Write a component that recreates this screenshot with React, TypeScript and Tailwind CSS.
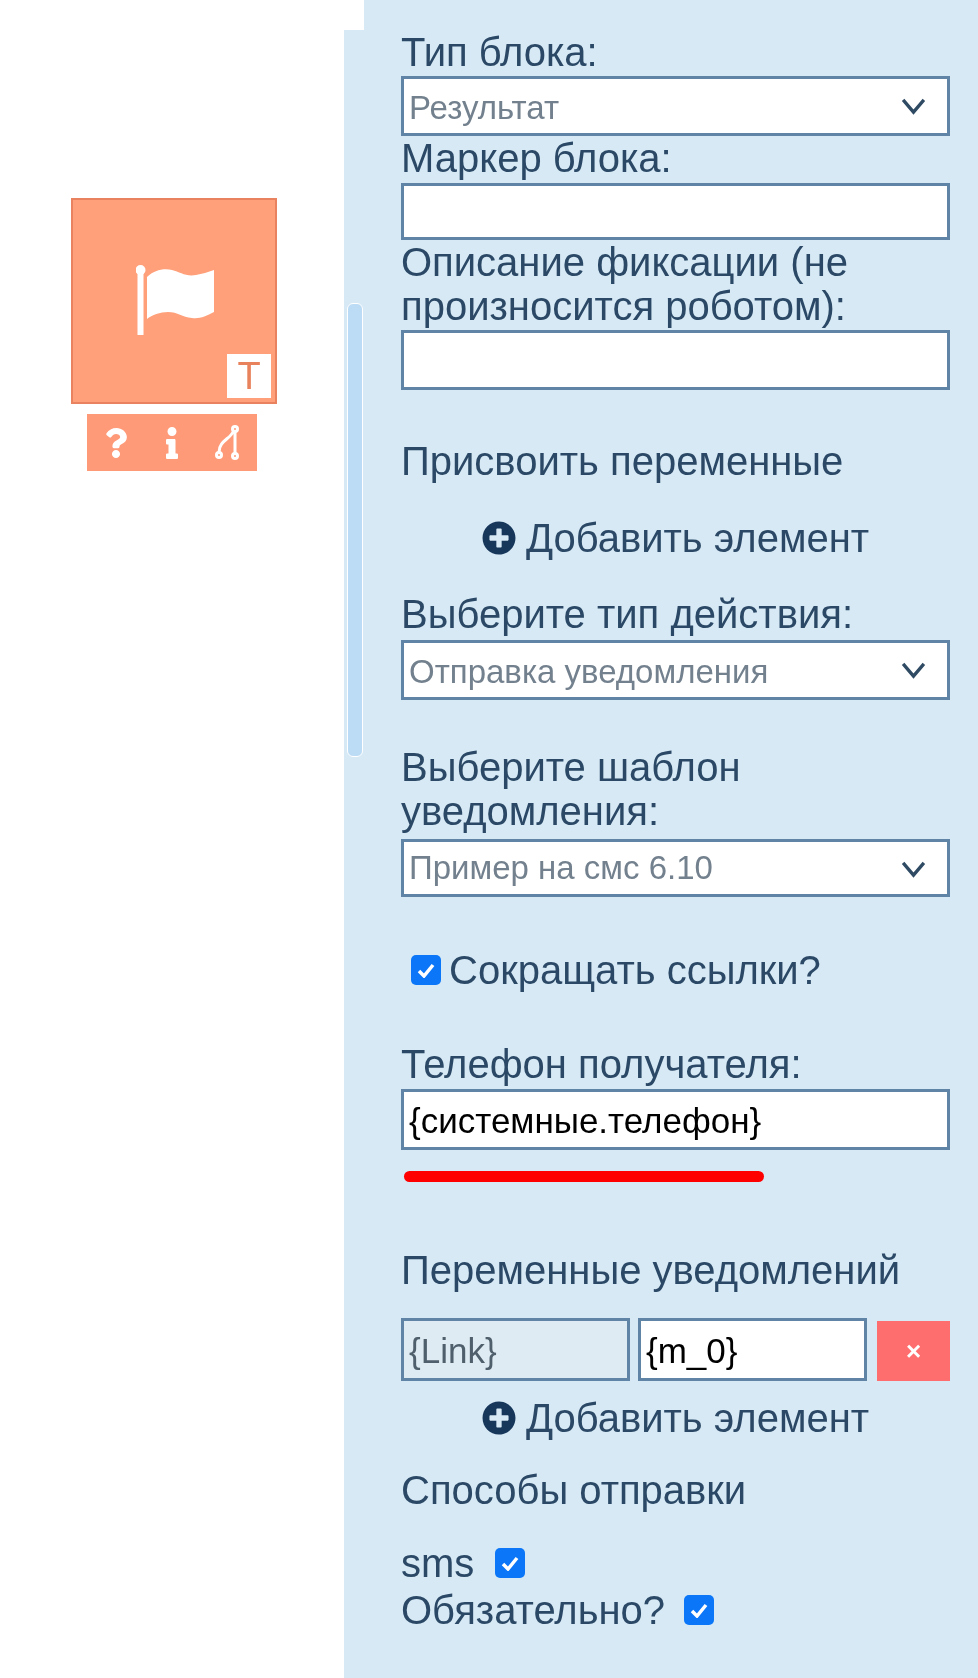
import React from 'react';
import { FaInfo, FaPlusCircle, FaQuestion } from 'react-icons/fa';

const labelCls = 'text-[40px] leading-[44px] text-[#2b4966]';
const inputCls =
  'block w-full border-[3px] border-[#5f84a6] bg-white px-[5px] pt-[3px] text-[35px] text-black outline-none';

const Chevron = () => (
  <svg
    viewBox="0 0 26 18"
    className="pointer-events-none absolute right-[24px] top-[22px] h-[17px] w-[25px]"
    fill="none"
    stroke="#2f4a63"
    strokeWidth="3.5"
  >
    <path d="M2 2 L13 15 L24 2" />
  </svg>
);

const Select = ({ value, height }: { value: string; height: string }) => (
  <div className="relative">
    <select
      defaultValue={value}
      className={`block w-full appearance-none border-[3px] border-[#5f84a6] bg-white px-[5px] pt-[3px] text-[33px] text-[#73818e] outline-none ${height}`}
    >
      <option>{value}</option>
    </select>
    <Chevron />
  </div>
);

const AddItem = ({ className }: { className: string }) => (
  <div className={`flex items-center justify-center gap-[10px] ${labelCls} ${className}`}>
    <FaPlusCircle className="h-[34px] w-[34px] text-[#16365a]" />
    <span>Добавить элемент</span>
  </div>
);

const Checked = () => (
  <span className="flex h-[30px] w-[30px] shrink-0 items-center justify-center rounded-[5px] bg-[#0b76f7]">
    <svg viewBox="0 0 18 15" className="h-[15px] w-[18px]" fill="none" stroke="white" strokeWidth="3.5">
      <path d="M2 8 L7 13 L16 2" />
    </svg>
  </span>
);

const FlagIcon = () => (
  <svg viewBox="0 0 78 70" className="h-[70px] w-[78px]" fill="white">
    <circle cx="4.5" cy="5" r="5" />
    <rect x="1.5" y="5" width="6" height="65" />
    <path d="M11 12 C18 5 28 3 36 5 C44 7 50 12 60 10 C66 9 72 7 78 5 L78 47 C70 51 64 54 56 53 C46 52 42 47 32 47 C24 47 16 50 11 54 Z" />
  </svg>
);

const ForkIcon = () => (
  <svg viewBox="0 0 26 36" className="h-[36px] w-[26px]" fill="none" stroke="white" strokeWidth="3">
    <circle cx="20" cy="4" r="2.5" />
    <circle cx="20" cy="31" r="2.5" />
    <circle cx="4" cy="30" r="2.5" />
    <path d="M20 7 L20 28 M18 7 C15 14 4 16 4 27" />
  </svg>
);

export default function App() {
  return (
    <div className="flex min-h-[1678px] w-[978px] bg-white font-['Liberation_Sans',Arial,sans-serif] blur-[0.7px]">
      {/* flow chart canvas */}
      <div className="w-[344px] pl-[71px] pt-[198px]">
        <div className="flex h-[206px] w-[206px] flex-col border-[2px] border-[#e9835f] bg-[#ffa07a]">
          <div className="flex flex-1 items-start justify-center pl-[2px] pt-[65px]">
            <FlagIcon />
          </div>
          <div className="flex justify-end pb-[4px] pr-[4px]">
            <div className="flex h-[44px] w-[44px] items-center justify-center bg-white text-[38px] leading-none text-[#e8825c]">
              T
            </div>
          </div>
        </div>
        <div className="ml-[16px] mt-[10px] flex h-[57px] w-[170px] items-center justify-between bg-[#ff9a78] pl-[17px] pr-[16px]">
          <FaQuestion className="h-[30px] w-[24px] text-white" />
          <FaInfo className="h-[32px] w-[18px] text-white" />
          <ForkIcon />
        </div>
      </div>

      {/* scroll bar of the side panel */}
      <div className="mt-[30px] w-[20px] bg-[#d6e9f5] pl-[3px] pr-[1px] pt-[273px]">
        <div className="h-[454px] rounded-[6px] border-[1px] border-white bg-[#bcdcf5]" />
      </div>

      {/* side panel */}
      <div className="flex-1 bg-[#d6e9f5] pl-[37px] pr-[28px] pt-[30px]">
        <div className={labelCls}>Тип блока:</div>
        <div className="mt-[2px]">
          <Select value="Результат" height="h-[60px]" />
        </div>
        <div className={labelCls}>Маркер блока:</div>
        <input readOnly className={`${inputCls} mt-[3px] h-[57px]`} />
        <div className={labelCls}>
          Описание фиксации (не
          <br />
          произносится роботом):
        </div>
        <input readOnly className={`${inputCls} mt-[2px] h-[60px]`} />
        <div className={`${labelCls} mt-[49px]`}>Присвоить переменные</div>
        <AddItem className="mt-[33px]" />
        <div className={`${labelCls} mt-[32px]`}>Выберите тип действия:</div>
        <div className="mt-[4px]">
          <Select value="Отправка уведомления" height="h-[60px]" />
        </div>
        <div className={`${labelCls} mt-[45px]`}>
          Выберите шаблон
          <br />
          уведомления:
        </div>
        <div className="mt-[6px]">
          <Select value="Пример на смс 6.10" height="h-[58px] !pt-0" />
        </div>
        <div className={`${labelCls} mt-[51px] flex items-center gap-[8px] pl-[10px]`}>
          <Checked />
          Сокращать ссылки?
        </div>
        <div className={`${labelCls} mt-[50px]`}>Телефон получателя:</div>
        <input readOnly value="{системные.телефон}" className={`${inputCls} mt-[3px] h-[61px]`} />
        <div className="ml-[3px] mt-[21px] h-[11px] w-[360px] rounded-[6px] bg-[#ff0000]" />
        <div className={`${labelCls} mt-[66px]`}>Переменные уведомлений</div>
        <div className="mt-[26px] flex items-end">
          <input readOnly value="{Link}" className={`${inputCls} h-[63px] !w-[229px] !bg-[#deebf2] !text-[#4f5f6c]`} />
          <input readOnly value="{m_0}" className={`${inputCls} ml-[8px] h-[63px] !w-[229px]`} />
          <div className="ml-[10px] flex h-[60px] w-[73px] items-center justify-center bg-[#ff6e6e] text-[26px] font-bold text-white">
            ×
          </div>
        </div>
        <AddItem className="mt-[15px]" />
        <div className={`${labelCls} mt-[28px]`}>Способы отправки</div>
        <div className={`${labelCls} mt-[29px] flex items-center gap-[21px]`}>
          sms
          <Checked />
        </div>
        <div className={`${labelCls} mt-[3px] flex items-center gap-[19px]`}>
          Обязательно?
          <Checked />
        </div>
      </div>
    </div>
  );
}
